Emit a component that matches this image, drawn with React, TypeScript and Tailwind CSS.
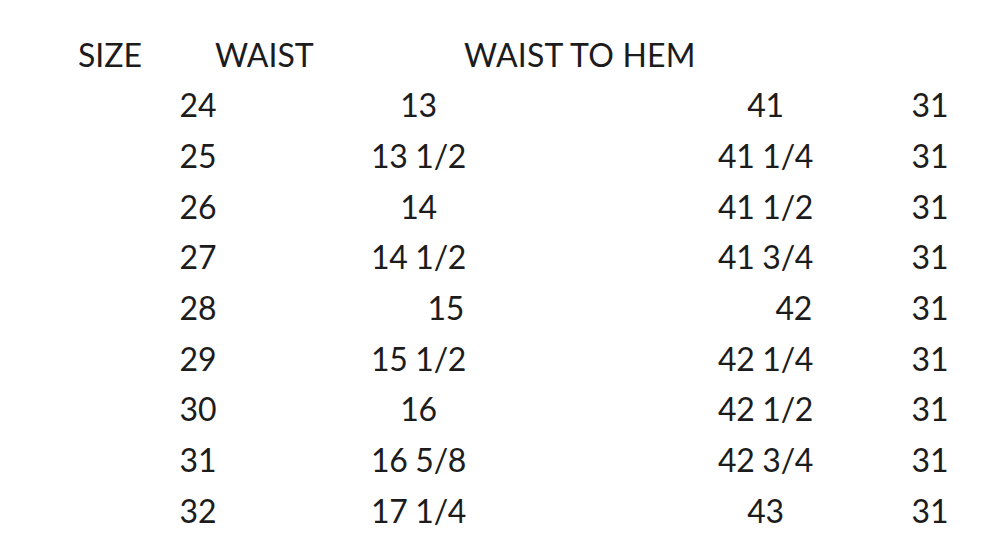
import React from "react";

type Align = "c" | "r";
const rows: [string, string, Align, string, Align][] = [
  ["24", "13", "c", "41", "c"],
  ["25", "13 1/2", "c", "41 1/4", "c"],
  ["26", "14", "c", "41 1/2", "c"],
  ["27", "14 1/2", "c", "41 3/4", "c"],
  ["28", "15", "r", "42", "r"],
  ["29", "15 1/2", "c", "42 1/4", "c"],
  ["30", "16", "c", "42 1/2", "c"],
  ["31", "16 5/8", "c", "42 3/4", "c"],
  ["32", "17 1/4", "c", "43", "c"],
];

export default function App() {
  return (
    <div
      className="w-[1002px] h-[556px] bg-white text-[#1c1c1c] pt-[29px] overflow-hidden"
      style={{ fontFamily: "Lato, 'Noto Sans', sans-serif" }}
    >
      <div className="flex items-center h-[51px] text-[32px] leading-none whitespace-nowrap">
        <div className="pl-[78px] w-[215px]">SIZE</div>
        <div className="w-[249px]">WAIST</div>
        <div className="tracking-[0.2px]">WAIST TO HEM</div>
      </div>
      {rows.map(([s, w, wa, h, ha]) => (
        <div key={s} className="flex items-center h-[50.7px] text-[32px] leading-none whitespace-nowrap">
          <div className="ml-[160px] w-[76px] flex justify-center">{s}</div>
          <div className={`ml-[137px] w-[91px] flex tracking-[-0.3px] ${wa === "r" ? "justify-end" : "justify-center"}`}>{w}</div>
          <div className={`ml-[255px] w-[93px] flex tracking-[-0.3px] ${ha === "r" ? "justify-end" : "justify-center"}`}>{h}</div>
          <div className="ml-[88px] w-[60px] flex justify-center">31</div>
        </div>
      ))}
    </div>
  );
}
